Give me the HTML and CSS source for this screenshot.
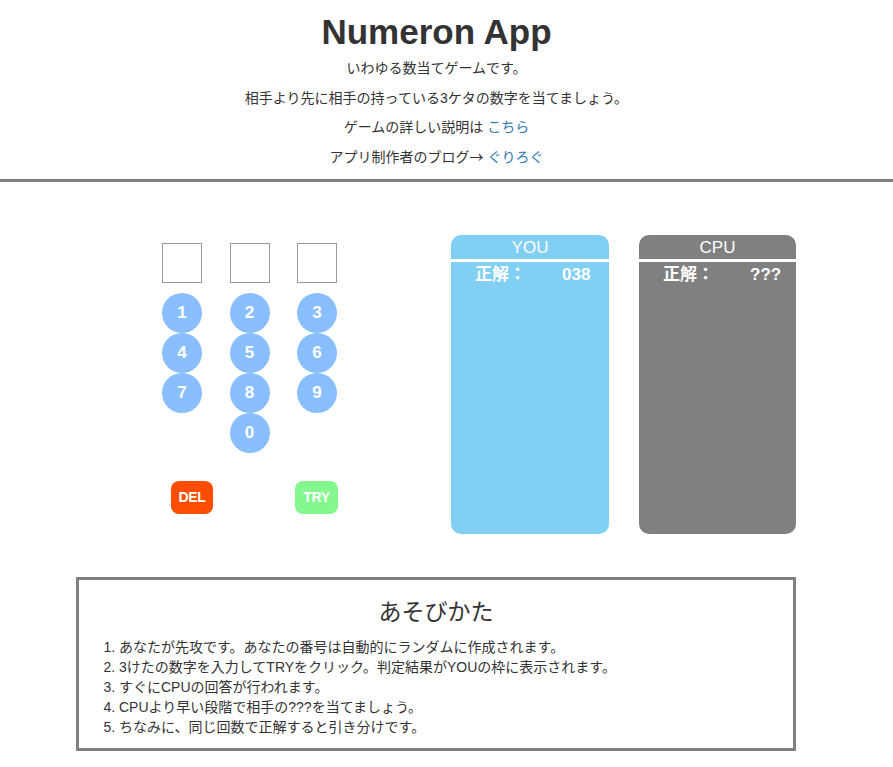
FILE: index.html
```html
<!DOCTYPE html>
<html lang="ja">
<head>
<meta charset="utf-8">
<title>Numeron App</title>
<link rel="stylesheet" href="styles.css">
</head>
<body>
<div class="page">
  <header class="intro">
    <h1 class="title">Numeron App</h1>
    <p class="lead">いわゆる数当てゲームです。</p>
    <p class="lead">相手より先に相手の持っている3ケタの数字を当てましょう。</p>
    <p class="lead">ゲームの詳しい説明は <a class="link" href="#">こちら</a></p>
    <p class="lead">アプリ制作者のブログ<span class="arrow">→</span> <a class="link" href="#">ぐりろぐ</a></p>
  </header>
</div>
<hr class="rule">
<div class="page">
  <main class="game">
    <div class="keypad">
      <div class="cols">
        <div class="col">
          <div class="slot"></div>
          <div class="key">1</div>
          <div class="key">4</div>
          <div class="key">7</div>
        </div>
        <div class="col">
          <div class="slot"></div>
          <div class="key">2</div>
          <div class="key">5</div>
          <div class="key">8</div>
          <div class="key">0</div>
        </div>
        <div class="col">
          <div class="slot"></div>
          <div class="key">3</div>
          <div class="key">6</div>
          <div class="key">9</div>
        </div>
      </div>
      <div class="actions">
        <div class="btn btn-del">DEL</div>
        <div class="btn btn-try">TRY</div>
      </div>
    </div>
    <div class="boards">
      <div class="board board-you">
        <div class="board-head">YOU</div>
        <div class="board-row"><span class="label">正解：</span><span class="value">038</span></div>
      </div>
      <div class="board board-cpu">
        <div class="board-head">CPU</div>
        <div class="board-row"><span class="label">正解：</span><span class="value">???</span></div>
      </div>
    </div>
  </main>
  <section class="howto">
    <h2 class="howto-title">あそびかた</h2>
    <ol class="steps">
      <li>あなたが先攻です。あなたの番号は自動的にランダムに作成されます。</li>
      <li>3けたの数字を入力してTRYをクリック。判定結果がYOUの枠に表示されます。</li>
      <li>すぐにCPUの回答が行われます。</li>
      <li>CPUより早い段階で相手の???を当てましょう。</li>
      <li>ちなみに、同じ回数で正解すると引き分けです。</li>
    </ol>
  </section>
</div>
</body>
</html>
```
FILE: styles.css
```css
html, body {
  margin: 0;
  padding: 0;
  background: #fff;
}
body {
  font-family: "Liberation Sans", "Noto Sans CJK JP", sans-serif;
  color: #333;
  font-size: 14px;
}
.page {
  width: 873px;
}
.intro {
  text-align: center;
  padding-top: 12px;
}
.title {
  margin: 0 0 2px;
  font-size: 35px;
  line-height: 40px;
  font-weight: bold;
  color: #333;
}
.lead {
  margin: 0;
  height: 29.5px;
  font-size: 14px;
  line-height: 29.5px;
}
.arrow {
  font-family: "Noto Sans CJK JP", sans-serif;
  line-height: 0;
}
.link {
  color: #337ab7;
  text-decoration: none;
}
.rule {
  margin: 7px 0 0;
  border: 0;
  height: 3px;
  background: #808080;
}
.game {
  display: flex;
  justify-content: space-between;
  align-items: flex-start;
  margin-left: 162px;
  width: 634px;
  padding-top: 53px;
}
.keypad {
  margin-top: 8px;
  width: 176px;
}
.cols {
  display: grid;
  grid-template-columns: 40px 40px 40px;
  column-gap: 27.5px;
  align-items: start;
}
.col {
  display: flex;
  flex-direction: column;
}
.slot {
  width: 38px;
  height: 38px;
  border: 1px solid #999;
  margin-bottom: 10px;
}
.key {
  width: 40px;
  height: 40px;
  border-radius: 50%;
  background: #89bfff;
  color: #fff;
  font-weight: bold;
  font-size: 17px;
  line-height: 40px;
  text-align: center;
}
.actions {
  display: flex;
  justify-content: space-between;
  margin-top: 28px;
  padding-left: 9px;
}
.btn {
  width: 43px;
  height: 33px;
  border-radius: 8px;
  color: #fff;
  font-size: 14px;
  font-weight: bold;
  letter-spacing: -0.4px;
  line-height: 33px;
  text-align: center;
}
.btn-del {
  width: 42px;
  background: #ff4d00;
}
.btn-try {
  background: #84f88f;
}
.boards {
  display: flex;
  gap: 30px;
}
.board {
  width: 158px;
  height: 299px;
  border-radius: 10px;
  color: #fff;
}
.board-you {
  background: #82cff4;
}
.board-cpu {
  width: 157px;
  background: #808080;
}
.board-head {
  height: 24px;
  line-height: 25px;
  font-size: 17px;
  text-align: center;
  border-bottom: 3px solid #fff;
}
.board-row {
  display: flex;
  padding-left: 24px;
  font-size: 17px;
  font-weight: bold;
  line-height: 25px;
}
.label {
  width: 87px;
}
.howto {
  margin: 43px 0 0 76px;
  width: 714px;
  border: 3px solid #808080;
  padding-bottom: 11px;
}
.howto-title {
  margin: 16px 0 9px;
  font-size: 23px;
  line-height: 32px;
  font-weight: normal;
  text-align: center;
}
.steps {
  margin: 0;
  padding-left: 40px;
  font-size: 14px;
  line-height: 20px;
}
```
